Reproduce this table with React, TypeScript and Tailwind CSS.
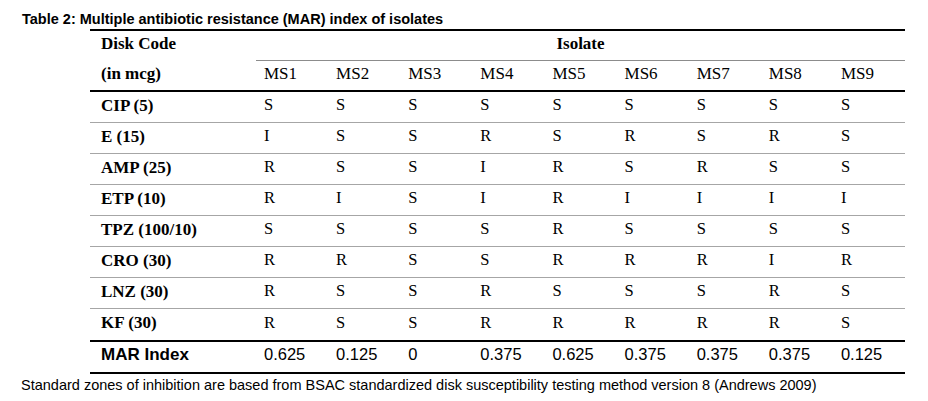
import React from "react";

const serif = "font-['Liberation_Serif','Times_New_Roman',serif]";
const sans = "font-['Liberation_Sans',Arial,sans-serif]";

const rows: [string, string[]][] = [
  ["CIP (5)", ["S", "S", "S", "S", "S", "S", "S", "S", "S"]],
  ["E (15)", ["I", "S", "S", "R", "S", "R", "S", "R", "S"]],
  ["AMP (25)", ["R", "S", "S", "I", "R", "S", "R", "S", "S"]],
  ["ETP (10)", ["R", "I", "S", "I", "R", "I", "I", "I", "I"]],
  ["TPZ (100/10)", ["S", "S", "S", "S", "R", "S", "S", "S", "S"]],
  ["CRO (30)", ["R", "R", "S", "S", "R", "R", "R", "I", "R"]],
  ["LNZ (30)", ["R", "S", "S", "R", "S", "S", "S", "R", "S"]],
  ["KF (30)", ["R", "S", "S", "R", "R", "R", "R", "R", "S"]],
];

const mar = ["0.625", "0.125", "0", "0.375", "0.625", "0.375", "0.375", "0.375", "0.125"];
const isolates = ["MS1", "MS2", "MS3", "MS4", "MS5", "MS6", "MS7", "MS8", "MS9"];

const grid = "grid grid-cols-[166px_repeat(9,minmax(0,1fr))]";

export default function App() {
  return (
    <div className="w-[928px] h-[401px] bg-white text-black overflow-hidden">
      <div className={`${sans} pl-[22px] pt-[11px] text-[14.5px] leading-[17px] font-bold`}>
        Table 2: Multiple antibiotic resistance (MAR) index of isolates
      </div>
      <div className="ml-[90px] mt-px w-[815px] border-t-2 border-black">
        <div className={`${grid} h-[30px] ${serif} text-[17px]`}>
          <div className="pl-[11px] font-bold flex items-center pb-[4px]">Disk Code</div>
          <div className="col-span-9 border-b border-[#8c8c8c] font-bold flex items-center justify-center pb-[3px]">
            Isolate
          </div>
        </div>
        <div className={`${grid} h-[31px] border-b-2 border-black ${serif} text-[17px]`}>
          <div className="pl-[11px] font-bold flex items-center pb-[3px]">(in mcg)</div>
          {isolates.map((m) => (
            <div key={m} className="pl-[8px] flex items-center pb-[3px]">
              {m}
            </div>
          ))}
        </div>
        {rows.map(([code, vals], i) => (
          <div
            key={code}
            className={`${grid} h-[31px] ${serif} text-[16.5px] ${
              i === rows.length - 1 ? "" : "border-b border-[#a6a6a6]"
            }`}
          >
            <div className="pl-[11px] font-bold text-[17px] flex items-center pb-[3px]">{code}</div>
            {vals.map((v, j) => (
              <div key={j} className="pl-[8px] flex items-center pb-[3px]">
                {v}
              </div>
            ))}
          </div>
        ))}
        <div className={`${grid} h-[34px] border-y-2 border-black ${sans} text-[16.5px]`}>
          <div className="pl-[11px] font-bold text-[17px] flex items-center pb-[5px]">MAR Index</div>
          {mar.map((v, j) => (
            <div key={j} className="pl-[8px] flex items-center pb-[5px]">
              {v}
            </div>
          ))}
        </div>
      </div>
      <div className={`${sans} pl-[21px] mt-[3px] text-[14.5px] leading-[16px]`}>
        Standard zones of inhibition are based from BSAC standardized disk susceptibility testing method version 8
        (Andrews 2009)
      </div>
    </div>
  );
}
